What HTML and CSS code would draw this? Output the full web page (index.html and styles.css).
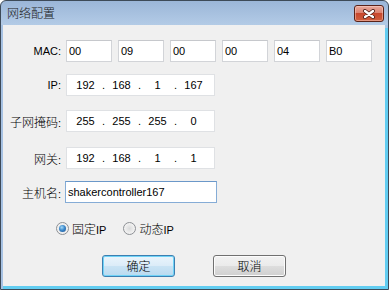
FILE: index.html
```html
<!DOCTYPE html>
<html lang="zh-CN">
<head>
<meta charset="utf-8">
<title>网络配置</title>
<link rel="stylesheet" href="styles.css">
</head>
<body>
<div class="window">
  <div class="titlebar">
    <span class="title">网络配置</span>
    <button class="close" aria-label="关闭">
      <svg width="14" height="10" viewBox="0 0 14 10">
        <path d="M3 2 L11 8 M11 2 L3 8" stroke="#4a1a12" stroke-width="4" stroke-linecap="round" fill="none"/>
        <path d="M3 2 L11 8 M11 2 L3 8" stroke="#ffffff" stroke-width="2.4" stroke-linecap="round" fill="none"/>
      </svg>
    </button>
  </div>
  <div class="client">
    <div class="row">
      <span class="lbl">MAC:</span>
      <div class="macs">
        <span class="box">00</span>
        <span class="box">09</span>
        <span class="box">00</span>
        <span class="box">00</span>
        <span class="box">04</span>
        <span class="box">B0</span>
      </div>
    </div>
    <div class="row r-ip">
      <span class="lbl">IP:</span>
      <div class="ipbox">
        <span class="seg">192</span><span class="dot">.</span><span class="seg">168</span><span class="dot">.</span><span class="seg">1</span><span class="dot">.</span><span class="seg">167</span>
      </div>
    </div>
    <div class="row r-mask">
      <span class="lbl"><span class="zh">子网掩码</span>:</span>
      <div class="ipbox">
        <span class="seg">255</span><span class="dot">.</span><span class="seg">255</span><span class="dot">.</span><span class="seg">255</span><span class="dot">.</span><span class="seg">0</span>
      </div>
    </div>
    <div class="row r-gw">
      <span class="lbl"><span class="zh">网关</span>:</span>
      <div class="ipbox">
        <span class="seg">192</span><span class="dot">.</span><span class="seg">168</span><span class="dot">.</span><span class="seg">1</span><span class="dot">.</span><span class="seg">1</span>
      </div>
    </div>
    <div class="row r-host">
      <span class="lbl"><span class="zh">主机名</span>:</span>
      <span class="host">shakercontroller167</span>
    </div>
    <div class="radios">
      <span class="opt"><span class="radio checked"></span><span><span class="zh">固定</span>IP</span></span>
      <span class="opt"><span class="radio"></span><span><span class="zh">动态</span>IP</span></span>
    </div>
    <div class="buttons">
      <button class="btn default"><span class="zh">确定</span></button>
      <button class="btn"><span class="zh">取消</span></button>
    </div>
  </div>
</div>
</body>
</html>
```

FILE: styles.css
```css
* { box-sizing: border-box; }

html, body {
  margin: 0;
  padding: 0;
  background: #ffffff;
}

body {
  font-family: "Liberation Sans", "Noto Sans CJK SC", sans-serif;
  font-size: 11px;
  color: #000;
}

.zh {
  font-family: "Noto Sans CJK SC", sans-serif;
  font-size: 12px;
  font-weight: 300;
}

.window {
  width: 389px;
  height: 290px;
  border: 1px solid #3d4a58;
  border-radius: 6px 6px 0 0;
  background: linear-gradient(#9bb6d8 0, #b3cbe6 24px, #a7c2e3 24px, #a7c2e3 100%);
  display: flex;
  flex-direction: column;
}

.titlebar {
  height: 24px;
  display: flex;
  align-items: flex-start;
  justify-content: space-between;
  padding: 3px 4px 0 6px;
}

.title {
  font-family: "Noto Sans CJK SC", sans-serif;
  font-size: 12px;
  font-weight: 300;
  line-height: 17px;
  color: #1a1a1a;
}

.close {
  width: 30px;
  height: 17px;
  padding: 0;
  margin: 1px 0 0 0;
  border: 1px solid #5a2218;
  border-radius: 3px;
  background: linear-gradient(#e9a99a 0, #dc8371 45%, #c8472d 50%, #d0603f 100%);
  box-shadow: inset 0 0 0 1px rgba(255, 220, 210, 0.45);
  display: flex;
  align-items: center;
  justify-content: center;
}

.client {
  width: 382px;
  height: 261px;
  margin-left: 2px;
  background: #f0f0f0;
  box-shadow: 3px 3px 0 #62cdf1, 0 3px 0 #62cdf1;
  padding-top: 15px;
}

.row {
  display: flex;
  align-items: center;
  height: 22px;
}

.r-ip { margin-top: 12px; }
.r-mask { margin-top: 14px; }
.r-gw { margin-top: 15px; }
.r-host { margin-top: 12px; }

.lbl {
  width: 58px;
  text-align: right;
  margin-right: 5px;
  white-space: nowrap;
}

.macs {
  display: flex;
  gap: 6px;
}

.box {
  width: 46px;
  height: 22px;
  border: 1px solid #d2d4d8;
  border-top-color: #c6c8cc;
  background: #fff;
  padding-left: 2px;
  line-height: 20px;
}

.ipbox {
  width: 149px;
  height: 22px;
  border: 1px solid #dfe1e4;
  background: #fff;
  display: flex;
  padding-left: 4px;
  line-height: 20px;
}

.seg {
  width: 29px;
  text-align: center;
}

.dot {
  width: 7px;
  text-align: center;
}

.host {
  width: 152px;
  height: 22px;
  margin-left: -1px;
  border: 1px solid #85acd6;
  border-top-color: #6b98c9;
  background: #fff;
  padding-left: 2px;
  line-height: 20px;
}

.radios {
  display: flex;
  align-items: center;
  gap: 17px;
  margin-top: 19px;
  padding-left: 53px;
  height: 13px;
}

.opt {
  display: flex;
  align-items: center;
  gap: 3px;
}

.radio {
  width: 13px;
  height: 13px;
  border-radius: 50%;
  border: 1px solid #8d9095;
  background: radial-gradient(circle at 50% 50%, #d9dadb 0, #eeeeee 55%, #f8f8f8 100%);
  display: flex;
  align-items: center;
  justify-content: center;
}

.radio.checked::after {
  content: "";
  width: 7px;
  height: 7px;
  border-radius: 50%;
  background: radial-gradient(circle at 40% 35%, #a6daf6 0, #3d8acd 45%, #1a4f8e 100%);
}

.buttons {
  display: flex;
  gap: 38px;
  margin-top: 20px;
  padding-left: 99px;
}

.btn {
  width: 73px;
  height: 22px;
  padding: 0;
  border: 1px solid #707070;
  border-radius: 3px;
  background: linear-gradient(#f2f2f2 0, #ebebeb 48%, #dddddd 52%, #cfcfcf 100%);
  box-shadow: inset 0 0 0 1px #fcfcfc;
  color: #000;
  line-height: 18px;
}

.btn.default {
  border-color: #3c7fb1;
  background: linear-gradient(#eaf5fc 0, #dcecf8 48%, #c9e3f4 52%, #b9daf0 100%);
  box-shadow: inset 0 0 0 1px #6fd3f7;
}
```
